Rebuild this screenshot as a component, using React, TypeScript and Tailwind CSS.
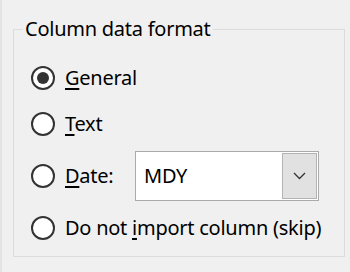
import React from 'react';

function Radio({ checked = false }: { checked?: boolean }) {
  return (
    <span className="w-[24px] h-[24px] shrink-0 rounded-full border-2 border-[#333333] bg-white flex items-center justify-center">
      {checked && <span className="w-[12px] h-[12px] rounded-full bg-[#333333]"></span>}
    </span>
  );
}

export default function App() {
  return (
    <div className="w-[350px] h-[272px] bg-[#f0f0f0] flex text-[20px] tracking-[-0.25px] text-black font-['Noto_Sans',sans-serif]">
      <div className="w-[2px] bg-[#e3e3e3]"></div>
      <div className="flex-1 pl-[11px] pt-[15px] pr-[5px]">
        <fieldset className="border border-[#dcdcdc] pb-[9px]">
          <legend className="ml-[9px] px-[2px] leading-[28px]">Column data format</legend>

          <div className="flex flex-col gap-[8px] pt-[16px] pl-[17px]">
            <label className="h-[38px] flex items-center gap-[10px]">
              <Radio checked />
              <span>
                <span className="underline underline-offset-[3px]">G</span>eneral
              </span>
            </label>

            <label className="h-[38px] flex items-center gap-[10px]">
              <Radio />
              <span>
                <span className="underline underline-offset-[3px]">T</span>ext
              </span>
            </label>

            <div className="h-[50px] flex items-center gap-[10px]">
              <Radio />
              <span className="w-[60px]">
                <span className="underline underline-offset-[3px]">D</span>ate:
              </span>
              <div className="w-[184px] h-[50px] border border-[#ababab] bg-white flex items-center">
                <span className="pl-[8px] flex-1">MDY</span>
                <div className="w-[35px] h-[46px] mr-[1px] border border-[#b3b3b3] bg-[#e1e1e1] flex items-center justify-center">
                  <svg width="13" height="8" viewBox="0 0 13 8">
                    <path d="M1 1 L6.5 6.5 L12 1" fill="none" stroke="#333333" strokeWidth="1.3" />
                  </svg>
                </div>
              </div>
            </div>

            <label className="h-[38px] flex items-center gap-[10px]">
              <Radio />
              <span>
                Do not <span className="underline underline-offset-[3px]">i</span>mport column (skip)
              </span>
            </label>
          </div>
        </fieldset>
      </div>
    </div>
  );
}
